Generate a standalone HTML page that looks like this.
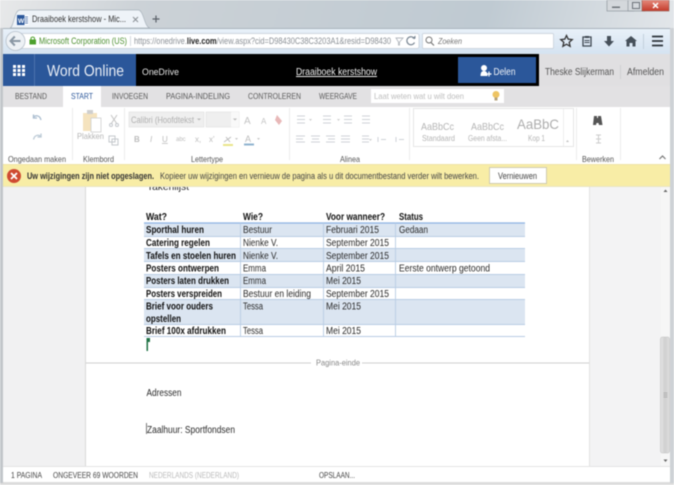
<!DOCTYPE html>
<html><head><meta charset="utf-8"><style>
html,body{margin:0;padding:0;width:674px;height:485px;overflow:hidden;background:#fff}
svg{display:block;filter:blur(.5px)}
text{font-family:"Liberation Sans",sans-serif;font-size:8.5px;fill:#333;white-space:pre}
.rl{font-size:8.5px;fill:#555}
.tb{font-size:8.5px;fill:#5a5a5a}
.c{font-size:10px;fill:#2a2a2a}
.b{font-size:10px;fill:#111;font-weight:bold}
.st{font-size:8px;fill:#444}
.ic{stroke:#c4c8cc;fill:none;stroke-width:1}
</style></head><body>
<svg width="674" height="485" viewBox="0 0 674 485" xmlns="http://www.w3.org/2000/svg">
<defs>
<linearGradient id="tit" x1="0" y1="0" x2="1" y2="0.2"><stop offset="0" stop-color="#e8e9ea"/><stop offset=".2" stop-color="#ccd2d7"/><stop offset=".7" stop-color="#bfcad2"/><stop offset="1" stop-color="#e6e9ec"/></linearGradient>
<linearGradient id="nav" x1="0" y1="0" x2="0" y2="1"><stop offset="0" stop-color="#e9f1f9"/><stop offset="1" stop-color="#d5e3f1"/></linearGradient>
<linearGradient id="cl" x1="0" y1="0" x2="0" y2="1"><stop offset="0" stop-color="#e58a7c"/><stop offset="1" stop-color="#c43b2b"/></linearGradient>
<linearGradient id="th" x1="0" y1="0" x2="1" y2="0"><stop offset="0" stop-color="#e6e6e6"/><stop offset=".5" stop-color="#cfcfcf"/><stop offset="1" stop-color="#e0e0e0"/></linearGradient>
</defs>
<!-- window -->
<rect width="674" height="485" fill="url(#tit)"/>
<rect x="0" y="480" width="674" height="5" fill="#dcdcdc"/>
<rect x="0" y="28" width="3" height="455" fill="#c2c6ca"/>
<rect x="670" y="28" width="4" height="455" fill="#ced2d6"/>
<!-- window controls -->
<rect x="607" y="0" width="27" height="11" fill="#d4d8dc" stroke="#8f979e" stroke-width=".7"/>
<rect x="612" y="6.500" width="8" height="1.500" fill="#6c7278"/>
<rect x="628" y="0" width="17" height="11" fill="#d4d8dc" stroke="#8f979e" stroke-width=".7"/>
<rect x="632.500" y="2.500" width="7" height="6" fill="none" stroke="#6c7278"/>
<rect x="642" y="0" width="27" height="11" fill="url(#cl)" stroke="#8f5a50" stroke-width=".6"/>
<path d="M653 3l5 5m0-5l-5 5" stroke="#fff" stroke-width="1.500"/>
<!-- tab -->
<path d="M10 28C14 27 14 10 20 10H138C144 10 144 27 150 28Z" fill="#eef3f8" stroke="#a8b2bb" stroke-width=".7"/>
<rect x="17" y="15" width="12" height="10" fill="#fff"/><rect x="17" y="15" width="7.500" height="10" fill="#2b579a"/><text x="18" y="23" style="font-size:6.500px;fill:#fff;font-weight:bold">W</text>
<path d="M25 17h3M25 19h3M25 21h3M25 23h3" stroke="#2b579a" stroke-width=".8"/>
<text x="32" y="22" textLength="94" lengthAdjust="spacingAndGlyphs" style="font-size:9.500px;fill:#333">Draaiboek kerstshow - Mic...</text>
<path d="M133 17l5 5m0-5l-5 5" stroke="#8a8f95" stroke-width="1"/>
<path d="M156 15.500v7M152.500 19h7" stroke="#5a6068" stroke-width="1.200"/>
<!-- nav bar -->
<rect x="3" y="28" width="667" height="26" fill="url(#nav)"/>
<rect x="3" y="28" width="667" height="1" fill="#aab4bd"/>
<rect x="16" y="33.500" width="403" height="15" rx="2" fill="#fff" stroke="#c3ccd6" stroke-width=".7"/>
<circle cx="15.500" cy="41" r="9.500" fill="#edf1f5" stroke="#b6c0ca" stroke-width=".8"/>
<path d="M20.500 41H11M14.800 36.500L10.500 41l4.300 4.500" fill="none" stroke="#8a97a4" stroke-width="2"/>
<rect x="29.500" y="39.500" width="6.500" height="5" fill="#4da02c"/><path d="M31 39.500v-1.500a2 2 0 0 1 3.500 0v1.500" fill="none" stroke="#4da02c"/>
<text x="39" y="44" textLength="88" lengthAdjust="spacingAndGlyphs" style="font-size:9px;fill:#4c8f2f">Microsoft Corporation (US)</text>
<path d="M130.500 36v10" stroke="#d5d9de"/>
<text x="134" y="44" textLength="257" lengthAdjust="spacingAndGlyphs" style="font-size:9px;fill:#8a8f95">https://onedrive.<tspan style="fill:#222;font-weight:bold">live.com</tspan>/view.aspx?cid=D98430C38C3203A1&amp;resid=D98430</text>
<path d="M396 38h7l-3.500 4v3l-1 0v-3z" fill="none" stroke="#b3b8be" stroke-width=".9"/>
<path d="M414.500 39a4 4 0 1 0 0 3.500" fill="none" stroke="#7a8794" stroke-width="1.200"/><path d="M412 38.500h3.500v-3z" fill="#7a8794"/>
<rect x="422.500" y="33.500" width="131" height="15" rx="1" fill="#fff" stroke="#c3ccd6" stroke-width=".7"/>
<circle cx="429" cy="40" r="3" fill="none" stroke="#777" stroke-width="1"/><path d="M431 42.500l3 3" stroke="#777" stroke-width="1.200"/>
<text x="438" y="44" textLength="24" lengthAdjust="spacingAndGlyphs" style="font-size:8.500px;fill:#777;font-style:italic">Zoeken</text>
<path d="M566.500 35.500l1.700 3.700 4 .4-3 2.700.9 4-3.600-2.100-3.600 2.100.9-4-3-2.700 4-.4z" fill="none" stroke="#333" stroke-width="1.300"/>
<path d="M583 37h8v9h-8z" fill="none" stroke="#3d4650" stroke-width="1.300"/><path d="M585 36h4v2h-4z" fill="#3d4650"/><path d="M584.500 40.500h5M584.500 42.500h5" stroke="#3d4650"/>
<path d="M607 36h4v5h3l-5 5.500-5-5.500h3z" fill="#46505a"/>
<path d="M631 36l-6 5h1.500v5.500h3v-3.500h3v3.500h3V41h1.500z" fill="#46505a"/>
<path d="M643.500 34v15" stroke="#c3d0dc"/>
<path d="M652 36.500h11M652 41h11M652 45.500h11" stroke="#2c333a" stroke-width="1.800"/>
<!-- Word header -->
<rect x="3" y="54" width="667" height="32" fill="#e0dfe1"/>
<rect x="3" y="54" width="536" height="32" fill="#000"/>
<rect x="3" y="54" width="133" height="32" fill="#2b579a"/>
<path d="M34.500 54v32" stroke="#4b72ad"/>
<path d="M13 66h3v3h-3zM17.500 66h3v3h-3zM22 66h3v3h-3zM13 70h3v3h-3zM17.500 70h3v3h-3zM22 70h3v3h-3zM13 74h3v3h-3zM17.500 74h3v3h-3zM22 74h3v3h-3z" fill="#fff" transform="translate(0 -1)"/>
<text x="47" y="76" textLength="77" lengthAdjust="spacingAndGlyphs" style="font-size:16px;fill:#e8edf5">Word Online</text>
<text x="142" y="75" textLength="37" lengthAdjust="spacingAndGlyphs" style="font-size:9.500px;fill:#e6e6e6">OneDrive</text>
<text x="296" y="75" textLength="81" lengthAdjust="spacingAndGlyphs" style="font-size:10px;fill:#f0f0f0;text-decoration:underline">Draaiboek kerstshow</text>
<rect x="458" y="57" width="78" height="26" fill="#2b579a"/>
<circle cx="484" cy="68" r="3" fill="#fff"/><path d="M480.500 76c0-4 1.500-5 3.500-5s3.500 1 3.500 5z" fill="#fff"/><path d="M489 71.500v5M486.500 74h5" stroke="#fff" stroke-width="1.200"/>
<text x="493.500" y="75" textLength="22" lengthAdjust="spacingAndGlyphs" style="font-size:10.500px;fill:#f0f3f8">Delen</text>
<text x="545" y="75" textLength="69" lengthAdjust="spacingAndGlyphs" style="font-size:10px;fill:#555">Theske Slijkerman</text>
<path d="M620.500 65v14" stroke="#cfcfd1"/>
<text x="627" y="75" textLength="37" lengthAdjust="spacingAndGlyphs" style="font-size:10px;fill:#555">Afmelden</text>
<!-- tabs -->
<rect x="3" y="86" width="667" height="21" fill="#e2e1e3"/>
<rect x="63" y="86" width="38" height="21" fill="#fff"/>
<text class="tb" x="15" y="99" textLength="32" lengthAdjust="spacingAndGlyphs">BESTAND</text>
<text class="tb" x="71" y="99" textLength="22" lengthAdjust="spacingAndGlyphs" style="fill:#2b579a">START</text>
<text class="tb" x="112" y="99" textLength="36" lengthAdjust="spacingAndGlyphs">INVOEGEN</text>
<text class="tb" x="166" y="99" textLength="64" lengthAdjust="spacingAndGlyphs">PAGINA-INDELING</text>
<text class="tb" x="248" y="99" textLength="53" lengthAdjust="spacingAndGlyphs">CONTROLEREN</text>
<text class="tb" x="319" y="99" textLength="38" lengthAdjust="spacingAndGlyphs">WEERGAVE</text>
<rect x="371" y="89" width="133" height="14" fill="#fff"/>
<text x="374" y="99" textLength="90" lengthAdjust="spacingAndGlyphs" style="font-size:8.500px;fill:#bdbdbd">Laat weten wat u wilt doen</text>
<circle cx="496" cy="94.500" r="3.500" fill="#eec463"/><rect x="494.500" y="97.500" width="3" height="3" fill="#b5a27a"/>
<!-- ribbon -->
<rect x="3" y="107" width="667" height="58" fill="#fff"/>
<path d="M72.500 108v52M124.500 108v52M289.500 108v52M409.500 108v52M576.500 108v52M620.500 108v52" stroke="#ececec"/>
<path d="M33 117.500c3-3 7-2 8 2.500M33.500 114.500v3.500h3.500" fill="none" stroke="#a9bccf" stroke-width="1.300"/>
<path d="M41.500 137c-3-3-7-2-8 2.500M41 133.500v3.500h-3.500" fill="none" stroke="#bccad6" stroke-width="1.300"/>
<text class="rl" x="8" y="162" textLength="58" lengthAdjust="spacingAndGlyphs">Ongedaan maken</text>
<rect x="83" y="113" width="14" height="18" fill="#f5e3be"/><rect x="87" y="110" width="6" height="4" fill="#cfcfcf"/><rect x="91" y="118" width="10" height="14" fill="#fff" stroke="#cfcfcf" stroke-width=".8"/>
<text x="77" y="139" textLength="27" lengthAdjust="spacingAndGlyphs" style="font-size:8.500px;fill:#b5b5b5">Plakken</text>
<path d="M111 115l6 9m0-9l-6 9" stroke="#c4c4c4" fill="none"/><circle cx="111" cy="125" r="1.500" class="ic"/><circle cx="117" cy="125" r="1.500" class="ic"/>
<rect x="109" y="136" width="6" height="6" class="ic"/><rect x="112" y="139" width="6" height="6" class="ic"/>
<text class="rl" x="83" y="162" textLength="31" lengthAdjust="spacingAndGlyphs">Klembord</text>
<rect x="129" y="112" width="75" height="15" fill="#efefef" stroke="#e2e2e2" stroke-width=".7"/>
<text x="131" y="123" textLength="63" lengthAdjust="spacingAndGlyphs" style="font-size:9px;fill:#b0b0b0">Calibri (Hoofdtekst</text>
<path d="M197 118.500h4l-2 2z" fill="#b8b8b8"/>
<rect x="206" y="112" width="33" height="15" fill="#efefef" stroke="#e2e2e2" stroke-width=".7"/><rect x="231" y="112" width="8" height="15" fill="#f9f9f9"/>
<path d="M233 118.500h4l-2 2z" fill="#b8b8b8"/>
<text x="244" y="124" style="font-size:10px;fill:#c4c4c4">A</text><text x="261" y="124" style="font-size:8px;fill:#c4c4c4">A</text>
<path d="M277 115l5 6-3 4-4-5z" fill="#e8b8b8"/>
<text x="134" y="142" style="font-size:8px;fill:#bcbcbc;font-weight:bold">B</text>
<text x="150" y="142" style="font-size:8px;fill:#bcbcbc;font-style:italic">I</text>
<text x="162" y="142" style="font-size:8px;fill:#bcbcbc;text-decoration:underline">U</text>
<text x="176" y="141" style="font-size:6px;fill:#bcbcbc">abc</text>
<text x="195" y="142" style="font-size:8px;fill:#bcbcbc">x,</text>
<text x="209" y="142" style="font-size:8px;fill:#bcbcbc">x'</text>
<path d="M224 142l7-5M226 137l4 5" stroke="#bcbcbc"/><path d="M223 145h10" stroke="#e9e58a" stroke-width="2"/>
<text x="245" y="142" style="font-size:9px;fill:#bcbcbc">A</text><path d="M244 144.500h10" stroke="#8fb3cf" stroke-width="2"/>
<path d="M235 138h3l-1.500 2zM257 138h3l-1.500 2z" fill="#c8c8c8"/>
<text class="rl" x="191" y="162" textLength="32" lengthAdjust="spacingAndGlyphs">Lettertype</text>
<g class="ic" stroke-width=".8" style="stroke:#cfd3d7">
<path d="M297 116h8M297 119.500h8M297 123h8M323 116h8M323 119.500h8M323 123h8M344 116h8M344 119.500h8M344 123h8M362 116h8M362 119.500h8M362 123h8"/>
<path d="M296 136h9M296 139h7M296 142h9M311 136h9M312 139h7M311 142h9M326 136h9M328 139h7M326 142h9M341 136h9M341 139h9M341 142h9M362 136h7M362 139h7M362 142h7"/>
<path d="M378 137v5M381 139.500h5M396 137v5M399 139.500h5"/>
</g>
<path d="M309 119h3l-1.500 2zM337 119h3l-1.500 2zM369 139h3l-1.500 2z" fill="#cfcfcf"/>
<text class="rl" x="340" y="162" textLength="20" lengthAdjust="spacingAndGlyphs">Alinea</text>
<rect x="413.500" y="108.500" width="160" height="38" fill="#fff" stroke="#e6e6e6"/>
<path d="M563.500 109v37" stroke="#eee"/>
<text x="421" y="130" textLength="33" lengthAdjust="spacingAndGlyphs" style="font-size:10.500px;fill:#b5b5b5">AaBbCc</text>
<text x="471" y="130" textLength="33" lengthAdjust="spacingAndGlyphs" style="font-size:10.500px;fill:#b5b5b5">AaBbCc</text>
<text x="517" y="129" textLength="42" lengthAdjust="spacingAndGlyphs" style="font-size:14px;fill:#adadad">AaBbC</text>
<text x="422" y="141" textLength="33" lengthAdjust="spacingAndGlyphs" style="font-size:8px;fill:#b5b5b5">Standaard</text>
<text x="468" y="141" textLength="39" lengthAdjust="spacingAndGlyphs" style="font-size:8px;fill:#b5b5b5">Geen afsta...</text>
<text x="528" y="141" textLength="17" lengthAdjust="spacingAndGlyphs" style="font-size:8px;fill:#b5b5b5">Kop 1</text>
<path d="M566 142h3l-1.500 -2z" fill="#c0c0c0"/>
<path d="M594 116h3v2h1v-2h3l1.500 9h-3.500l-.5-2h-2l-.5 2H593z" fill="#555"/>
<path d="M596 135h5M598.500 135v8M596 139h5M596 143h5" stroke="#ccc" fill="none"/>
<text class="rl" x="582" y="162" textLength="32" lengthAdjust="spacingAndGlyphs">Bewerken</text>
<path d="M659.500 159l3-3 3 3" fill="none" stroke="#777" stroke-width="1.200"/>
<!-- doc bg -->
<rect x="3" y="186" width="82" height="281" fill="#f1f1f2"/>
<rect x="85" y="186" width="504" height="281" fill="#fff"/>
<path d="M85.500 186v281" stroke="#d8d8d8"/>
<rect x="589" y="186" width="72" height="281" fill="#f3f3f4"/>
<path d="M589.500 186v281" stroke="#e2e2e2"/>
<rect x="661" y="186" width="9" height="281" fill="#f6f6f6"/>
<path d="M665.500 189.500l-2 2.500h4z" fill="#666"/>
<rect x="660.500" y="337" width="9" height="116" rx="2" fill="url(#th)" stroke="#c2c2c2" stroke-width=".6"/>
<path d="M663.500 393h4M663.500 395h4M663.500 397h4" stroke="#8a8a8a" stroke-width=".6"/>
<path d="M665.500 462l-2-2.500h4z" fill="#666"/>
<!-- table -->
<rect x="144" y="223" width="381" height="14" fill="#dbe5f1"/>
<rect x="144" y="248" width="381" height="13" fill="#dbe5f1"/>
<rect x="144" y="274" width="381" height="13" fill="#dbe5f1"/>
<rect x="144" y="299" width="381" height="26" fill="#dbe5f1"/>
<path d="M144 223h381" stroke="#8db3e2" stroke-width="1.200"/>
<path d="M144 236.500h381M144 248.500h381M144 261.500h381M144 274.500h381M144 287.500h381M144 299.500h381M144 324.500h381M144 336.500h381" stroke="#b8cce4" stroke-width=".9"/>
<path d="M240.500 223v114M323.500 223v114M395.500 223v114" stroke="#b8cce4" stroke-width=".9"/>
<g>
<text class="b" x="146" y="220" textLength="21" lengthAdjust="spacingAndGlyphs">Wat?</text>
<text class="b" x="243" y="220" textLength="20" lengthAdjust="spacingAndGlyphs">Wie?</text>
<text class="b" x="326" y="220" textLength="59" lengthAdjust="spacingAndGlyphs">Voor wanneer?</text>
<text class="b" x="399" y="220" textLength="24" lengthAdjust="spacingAndGlyphs">Status</text>
<text class="b" x="146" y="233" textLength="58" lengthAdjust="spacingAndGlyphs">Sporthal huren</text>
<text class="c" x="243" y="233" textLength="29" lengthAdjust="spacingAndGlyphs">Bestuur</text>
<text class="c" x="326" y="233" textLength="53" lengthAdjust="spacingAndGlyphs">Februari 2015</text>
<text class="c" x="399" y="233" textLength="29" lengthAdjust="spacingAndGlyphs">Gedaan</text>
<text class="b" x="146" y="246" textLength="64" lengthAdjust="spacingAndGlyphs">Catering regelen</text>
<text class="c" x="243" y="246" textLength="35" lengthAdjust="spacingAndGlyphs">Nienke V.</text>
<text class="c" x="326" y="246" textLength="63" lengthAdjust="spacingAndGlyphs">September 2015</text>
<text class="b" x="146" y="259" textLength="90" lengthAdjust="spacingAndGlyphs">Tafels en stoelen huren</text>
<text class="c" x="243" y="259" textLength="35" lengthAdjust="spacingAndGlyphs">Nienke V.</text>
<text class="c" x="326" y="259" textLength="63" lengthAdjust="spacingAndGlyphs">September 2015</text>
<text class="b" x="146" y="271.500" textLength="73" lengthAdjust="spacingAndGlyphs">Posters ontwerpen</text>
<text class="c" x="243" y="271.500" textLength="23" lengthAdjust="spacingAndGlyphs">Emma</text>
<text class="c" x="326" y="271.500" textLength="39" lengthAdjust="spacingAndGlyphs">April 2015</text>
<text class="c" x="399" y="271.500" textLength="91" lengthAdjust="spacingAndGlyphs">Eerste ontwerp getoond</text>
<text class="b" x="146" y="284" textLength="83" lengthAdjust="spacingAndGlyphs">Posters laten drukken</text>
<text class="c" x="243" y="284" textLength="23" lengthAdjust="spacingAndGlyphs">Emma</text>
<text class="c" x="326" y="284" textLength="35" lengthAdjust="spacingAndGlyphs">Mei 2015</text>
<text class="b" x="146" y="297" textLength="76" lengthAdjust="spacingAndGlyphs">Posters verspreiden</text>
<text class="c" x="243" y="297" textLength="68" lengthAdjust="spacingAndGlyphs">Bestuur en leiding</text>
<text class="c" x="326" y="297" textLength="63" lengthAdjust="spacingAndGlyphs">September 2015</text>
<text class="b" x="146" y="309.500" textLength="67" lengthAdjust="spacingAndGlyphs">Brief voor ouders</text>
<text class="c" x="243" y="309.500" textLength="20" lengthAdjust="spacingAndGlyphs">Tessa</text>
<text class="c" x="326" y="309.500" textLength="35" lengthAdjust="spacingAndGlyphs">Mei 2015</text>
<text class="b" x="146" y="322" textLength="35" lengthAdjust="spacingAndGlyphs">opstellen</text>
<text class="b" x="146" y="334" textLength="80" lengthAdjust="spacingAndGlyphs">Brief 100x afdrukken</text>
<text class="c" x="243" y="334" textLength="20" lengthAdjust="spacingAndGlyphs">Tessa</text>
<text class="c" x="326" y="334" textLength="35" lengthAdjust="spacingAndGlyphs">Mei 2015</text>
</g>
<rect x="146.500" y="338" width="1.500" height="13" fill="#217346"/><rect x="146.500" y="338" width="3.500" height="4" fill="#217346"/>
<!-- page break -->
<path d="M86 363h225M362 363h227" stroke="#cfcfcf"/>
<text x="316" y="365.500" textLength="44" lengthAdjust="spacingAndGlyphs" style="font-size:8px;fill:#888">Pagina-einde</text>
<text class="c" x="146.500" y="396" textLength="35" lengthAdjust="spacingAndGlyphs">Adressen</text>
<text class="c" x="147" y="433" textLength="88" lengthAdjust="spacingAndGlyphs">Zaalhuur: Sportfondsen</text>
<path d="M146.500 423v11" stroke="#555" stroke-width=".8"/>
<!-- takenlijst + yellow bar -->
<text class="c" x="147" y="190" textLength="42" lengthAdjust="spacingAndGlyphs">Takenlijst</text>
<rect x="3" y="164" width="667" height="22" fill="#f8eda6"/>
<rect x="3" y="164" width="667" height="1" fill="#eee3a8"/>
<rect x="3" y="186" width="667" height="1" fill="#e9e5c4"/>
<circle cx="14" cy="176" r="7" fill="#cf4a32"/>
<path d="M11 173l6 6m0-6l-6 6" stroke="#fff" stroke-width="1.800"/>
<text x="27" y="179" textLength="127" lengthAdjust="spacingAndGlyphs" style="font-size:9px;font-weight:bold;fill:#333">Uw wijzigingen zijn niet opgeslagen.</text>
<text x="160" y="179" textLength="319" lengthAdjust="spacingAndGlyphs" style="font-size:9px;fill:#444">Kopieer uw wijzigingen en vernieuw de pagina als u dit documentbestand verder wilt bewerken.</text>
<rect x="489.500" y="167.500" width="57" height="16" fill="#fff" stroke="#cfcbb0"/>
<text x="498" y="179" textLength="39" lengthAdjust="spacingAndGlyphs" style="font-size:9px;fill:#444">Vernieuwen</text>
<!-- status -->
<rect x="3" y="467" width="667" height="15" fill="#fff"/>
<path d="M3 466.500h667" stroke="#e4e4e4"/>
<text class="st" x="11" y="478" textLength="31" lengthAdjust="spacingAndGlyphs">1 PAGINA</text>
<text class="st" x="53" y="478" textLength="85" lengthAdjust="spacingAndGlyphs">ONGEVEER 69 WOORDEN</text>
<text class="st" x="149" y="478" textLength="90" lengthAdjust="spacingAndGlyphs" style="fill:#bbb">NEDERLANDS (NEDERLAND)</text>
<text class="st" x="319" y="478" textLength="36" lengthAdjust="spacingAndGlyphs">OPSLAAN...</text>
</svg>
</body></html>
